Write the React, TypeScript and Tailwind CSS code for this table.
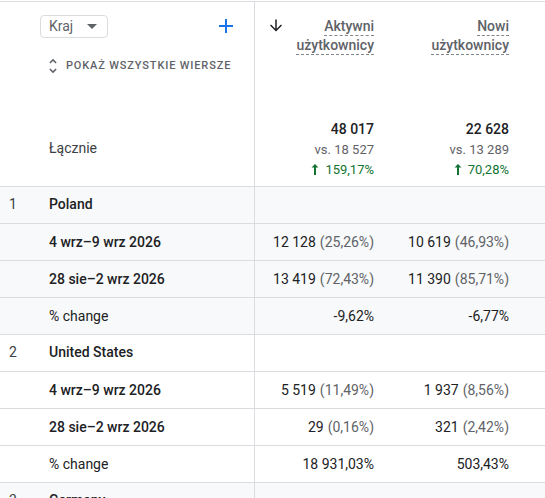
import React from "react";

type Cell = { value: string; share?: string };
type Row = { label: string; a: Cell; b: Cell; weight: "medium" | "normal" };
type Group = { rank: number; name: string; shaded: boolean; rows: Row[] };

const groups: Group[] = [
  {
    rank: 1,
    name: "Poland",
    shaded: true,
    rows: [
      { label: "4 wrz–9 wrz 2026", a: { value: "12 128", share: "25,26%" }, b: { value: "10 619", share: "46,93%" }, weight: "medium" },
      { label: "28 sie–2 wrz 2026", a: { value: "13 419", share: "72,43%" }, b: { value: "11 390", share: "85,71%" }, weight: "medium" },
      { label: "% change", a: { value: "-9,62%" }, b: { value: "-6,77%" }, weight: "normal" },
    ],
  },
  {
    rank: 2,
    name: "United States",
    shaded: false,
    rows: [
      { label: "4 wrz–9 wrz 2026", a: { value: "5 519", share: "11,49%" }, b: { value: "1 937", share: "8,56%" }, weight: "medium" },
      { label: "28 sie–2 wrz 2026", a: { value: "29", share: "0,16%" }, b: { value: "321", share: "2,42%" }, weight: "medium" },
      { label: "% change", a: { value: "18 931,03%" }, b: { value: "503,43%" }, weight: "normal" },
    ],
  },
  { rank: 3, name: "Germany", shaded: true, rows: [] },
];

function ValueCell({ cell }: { cell: Cell }) {
  return (
    <div className="flex items-center justify-end pr-3 text-[14px] text-[#202124]">
      <span>{cell.value}</span>
      {cell.share && <span className="ml-1 text-[#5f6368]">({cell.share})</span>}
    </div>
  );
}

function MetricHeader({ top, bottom }: { top: string; bottom: string }) {
  return (
    <div className="flex flex-col items-end text-[14px] font-medium text-[#5f6368]">
      <span className="border-b border-dashed border-[#80868b] leading-[18px]">{top}</span>
      <span className="border-b border-dashed border-[#80868b] leading-[18px]">{bottom}</span>
    </div>
  );
}

function Totals({ total, prev, change }: { total: string; prev: string; change: string }) {
  return (
    <div className="flex flex-col items-end gap-[3px] text-right">
      <span className="text-[14px] font-medium leading-[17px] text-[#202124]">{total}</span>
      <span className="text-[13px] leading-[17px] text-[#5f6368]">vs. {prev}</span>
      <span className="flex items-center gap-[6px] text-[13px] leading-[17px] text-[#137333]">
        <svg width="8" height="11" viewBox="0 0 8 11" fill="#137333">
          <path d="M4 0L7.5 3.6H5V11H3V3.6H0.5z" />
        </svg>
        {change}
      </span>
    </div>
  );
}

export default function App() {
  return (
    <div className="h-[498px] w-[545px] overflow-hidden bg-white pt-px font-['Roboto',sans-serif] text-[#202124]">
      {/* header */}
      <div className="grid h-[186px] grid-cols-[255px_131px_135px_1fr] border-y border-[#dadce0]">
        <div className="flex flex-col border-r border-[#dadce0] pl-10 pr-[21px]">
          <div className="mt-[13px] flex items-center justify-between">
            <button className="flex h-[23px] w-[68px] items-center justify-between rounded-[4px] border border-[#dadce0] pl-[8px] pr-[10px] text-[14px] text-[#5f6368]">
              <span>Kraj</span>
              <svg width="10" height="5" viewBox="0 0 10 5" fill="#5f6368">
                <path d="M0 0l5 5 5-5z" />
              </svg>
            </button>
            <svg className="-mt-px" width="14" height="14" viewBox="5 5 14 14" fill="#1a73e8">
              <path d="M19 13h-6v6h-2v-6H5v-2h6V5h2v6h6v2z" />
            </svg>
          </div>
          <div className="mt-[20px] flex items-center gap-[8px] pl-2 text-[11px] font-medium tracking-[0.85px] text-[#5f6368]">
            <svg width="10" height="16" viewBox="6 2 12 20" fill="#5f6368">
              <path d="M12 5.83L15.17 9l1.41-1.41L12 3 7.41 7.59 8.83 9 12 5.83zm0 12.34L8.83 15l-1.41 1.41L12 21l4.59-4.59L15.17 15 12 18.17z" />
            </svg>
            <span>POKAŻ WSZYSTKIE WIERSZE</span>
          </div>
          <div className="mt-auto mb-[27px] pl-[9px] text-[14px] text-[#3c4043]">Łącznie</div>
        </div>
        <div className="flex flex-col justify-between pb-[8px] pl-[15px] pr-3 pt-[15px]">
          <div className="flex items-start justify-between">
            <svg className="mt-[2px]" width="12" height="13" viewBox="4 4 16 16" fill="#202124">
              <path d="M20 12l-1.41-1.41L13 16.17V4h-2v12.17l-5.58-5.59L4 12l8 8 8-8z" />
            </svg>
            <MetricHeader top="Aktywni" bottom="użytkownicy" />
          </div>
          <Totals total="48 017" prev="18 527" change="159,17%" />
        </div>
        <div className="flex flex-col justify-between pb-[8px] pr-3 pt-[15px]">
          <MetricHeader top="Nowi" bottom="użytkownicy" />
          <Totals total="22 628" prev="13 289" change="70,28%" />
        </div>
        <div />
      </div>

      {/* body */}
      {groups.map((g) => (
        <div key={g.rank} className={g.shaded ? "bg-[#f8f9fa]" : "bg-white"}>
          <div className="grid h-[37px] grid-cols-[255px_131px_135px_1fr] border-b border-[#dadce0]">
            <div className="flex items-center border-r border-[#dadce0] pb-px text-[14px]">
              <span className="w-[49px] pl-[9px] text-[#3c4043]">{g.rank}</span>
              <span className="font-medium">{g.name}</span>
            </div>
          </div>
          {g.rows.map((r) => (
            <div key={r.label} className="grid h-[37px] grid-cols-[255px_131px_135px_1fr] border-b border-[#dadce0]">
              <div
                className={
                  "flex items-center border-r border-[#dadce0] pl-[49px] text-[14px] " +
                  (r.weight === "medium" ? "font-medium" : "font-normal")
                }
              >
                {r.label}
              </div>
              <ValueCell cell={r.a} />
              <ValueCell cell={r.b} />
              <div />
            </div>
          ))}
        </div>
      ))}
    </div>
  );
}
